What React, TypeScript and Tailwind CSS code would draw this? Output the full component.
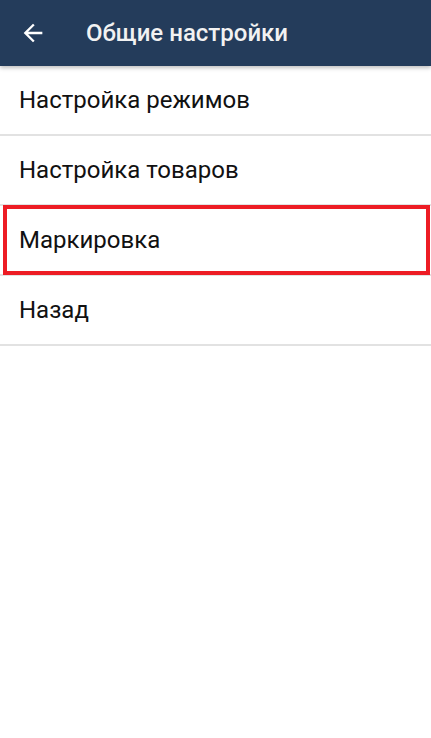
import React from "react";

const items = ["Настройка режимов", "Настройка товаров", "Маркировка", "Назад"];

export default function App() {
  return (
    <div className="w-[431px] h-[738px] bg-white relative overflow-hidden" style={{ fontFamily: "Roboto, 'Liberation Sans', sans-serif" }}>
      <div className="relative z-10 h-[66px] bg-[#243c5b] flex items-center shadow-[0_2px_4px_rgba(0,0,0,0.25)]">
        <div className="w-[86px] flex items-center pl-[19px]">
          <svg width="28" height="28" viewBox="0 0 24 24">
            <path d="M20 11H7.83l5.59-5.59L12 4l-8 8 8 8 1.41-1.41L7.83 13H20v-2z" fill="#ffffff" />
          </svg>
        </div>
        <span className="text-[24px] font-medium text-[#f2f2f2] leading-none">Общие настройки</span>
      </div>
      <div className="flex flex-col">
        {items.map((t, i) => (
          <div key={t} className="relative h-[70px] flex items-center border-b-2 border-[#e2e2e2] pl-[19px]">
            <span className="text-[24px] text-[#111111] leading-none">{t}</span>
            {i === 2 && (
              <div className="absolute left-[3px] right-[1px] top-[-1px] bottom-[-1px] border-4 border-[#ed1c24]" />
            )}
          </div>
        ))}
      </div>
    </div>
  );
}
